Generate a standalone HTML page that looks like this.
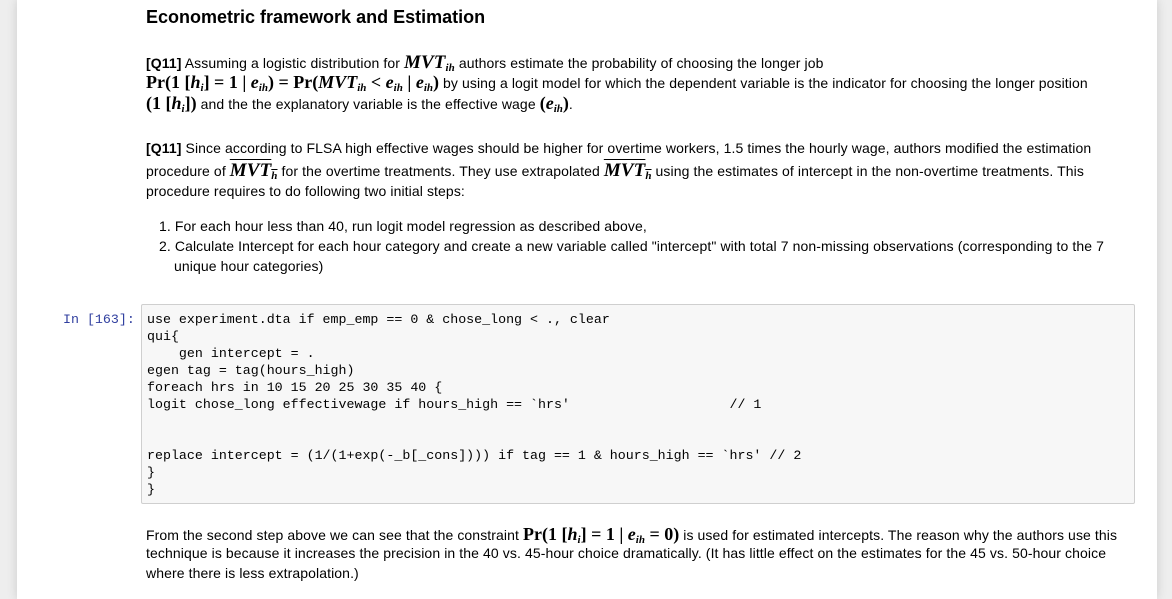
<!DOCTYPE html>
<html><head><meta charset="utf-8"><style>
html,body{margin:0;padding:0;}
body{width:1172px;height:599px;background:#eeeeee;position:relative;overflow:hidden;font-family:"Liberation Sans",Arial,sans-serif;font-size:14px;color:#000;}
#page{position:absolute;left:17px;top:0;width:1140px;height:599px;background:#fff;box-shadow:0 0 10px rgba(0,0,0,0.15);}
.l{position:absolute;left:146px;white-space:nowrap;line-height:18px;letter-spacing:0.1px;}
.m{font-family:"Liberation Serif",serif;font-weight:bold;font-size:18px;letter-spacing:0;}
.mi{font-family:"Liberation Serif",serif;font-weight:bold;font-style:italic;font-size:16px;}
.big{font-size:19px;}
sub{font-size:11px;vertical-align:-3px;line-height:0;}
.ov{text-decoration:overline;}
#code{position:absolute;left:141px;top:304px;width:992px;height:198px;background:#f7f7f7;border:1px solid #cfcfcf;border-radius:2px;}
.c{position:absolute;left:147px;font-family:"Liberation Mono",monospace;font-size:13.3px;line-height:17px;white-space:pre;color:#000;}
#prompt{position:absolute;left:63px;top:311px;font-family:"Liberation Mono",monospace;font-size:13.3px;line-height:17px;color:#303f9f;white-space:pre;}
</style></head><body>
<div id="page"></div>
<div class="l" style="top:6px;font-size:18px;font-weight:bold;line-height:22px;letter-spacing:0;">Econometric framework and Estimation</div>

<div class="l" style="top:54px;"><b>[Q11]</b> Assuming a logistic distribution for <span class="mi big">MVT<sub>ih</sub></span> authors estimate the probability of choosing the longer job</div>
<div class="l" style="top:73px;"><span class="m">Pr(1 [<i>h<sub>i</sub></i>] = 1 | <i>e<sub>ih</sub></i>) = Pr(<i>MVT<sub>ih</sub></i> &lt; <i>e<sub>ih</sub></i> | <i>e<sub>ih</sub></i>)</span> by using a logit model for which the dependent variable is the indicator for choosing the longer position</div>
<div class="l" style="top:94px;"><span class="m">(1 [<i>h<sub>i</sub></i>])</span> and the the explanatory variable is the effective wage <span class="m">(<i>e<sub>ih</sub></i>)</span>.</div>

<div class="l" style="top:139px;"><b>[Q11]</b> Since according to FLSA high effective wages should be higher for overtime workers, 1.5 times the hourly wage, authors modified the estimation</div>
<div class="l" style="top:162px;">procedure of <span class="mi big ov">MVT<sub>h</sub></span> for the overtime treatments. They use extrapolated <span class="mi big ov">MVT<sub>h</sub></span> using the estimates of intercept in the non-overtime treatments. This</div>
<div class="l" style="top:182px;">procedure requires to do following two initial steps:</div>

<div class="l" style="top:217px;left:159px;">1. For each hour less than 40, run logit model regression as described above,</div>
<div class="l" style="top:237px;left:159px;">2. Calculate Intercept for each hour category and create a new variable called "intercept" with total 7 non-missing observations (corresponding to the 7</div>
<div class="l" style="top:257px;left:174px;">unique hour categories)</div>

<div id="code"></div>
<div id="prompt">In [163]:</div>
<div class="c" style="top:311px;">use experiment.dta if emp_emp == 0 &amp; chose_long &lt; ., clear
qui{
    gen intercept = .
egen tag = tag(hours_high)
foreach hrs in 10 15 20 25 30 35 40 {
logit chose_long effectivewage if hours_high == `hrs'                    // 1


replace intercept = (1/(1+exp(-_b[_cons]))) if tag == 1 &amp; hours_high == `hrs' // 2
}
}</div>

<div class="l" style="top:525px;">From the second step above we can see that the constraint <span class="m">Pr(1 [<i>h<sub>i</sub></i>] = 1 | <i>e<sub>ih</sub></i> = 0)</span> is used for estimated intercepts. The reason why the authors use this</div>
<div class="l" style="top:544px;">technique is because it increases the precision in the 40 vs. 45-hour choice dramatically. (It has little effect on the estimates for the 45 vs. 50-hour choice</div>
<div class="l" style="top:564px;">where there is less extrapolation.)</div>
</body></html>
